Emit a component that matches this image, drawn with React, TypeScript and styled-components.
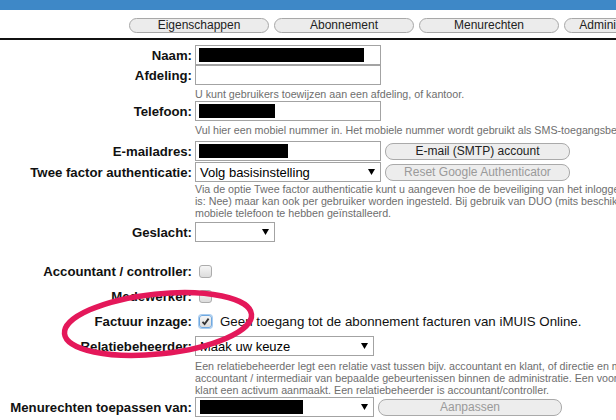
import React from 'react';
import styled, { createGlobalStyle } from 'styled-components';

const GlobalStyle = createGlobalStyle`
  html, body {
    margin: 0;
    padding: 0;
    background: #fff;
    overflow: hidden;
  }
  body {
    font-family: 'Liberation Sans', Arial, sans-serif;
    color: #000;
  }
`;

const Page = styled.div`
  position: relative;
  width: 616px;
  height: 420px;
  overflow: hidden;
`;

const TopBar = styled.div`
  height: 10px;
  background: #3e88c7;
`;

const Tabs = styled.div`
  display: flex;
  gap: 5px;
  padding: 8px 0 5px 129px;
  white-space: nowrap;
`;

const TabButton = styled.div`
  flex: 0 0 140px;
  height: 15px;
  box-sizing: border-box;
  border: 1px solid #a8a8a8;
  border-radius: 8px;
  background: #ececec;
  font-size: 12px;
  line-height: 13px;
  color: #222;
  text-align: center;
  overflow: hidden;
`;

const Divider = styled.div`
  height: 2px;
  background: #111;
`;

const Form = styled.div`
  padding-top: 5px;
`;

const Row = styled.div<{ $h?: number; $mt?: number }>`
  display: grid;
  grid-template-columns: 192px 1fr;
  column-gap: 3px;
  height: ${p => (p.$h ?? 20)}px;
  margin-top: ${p => (p.$mt ?? 0)}px;
`;

const Label = styled.div`
  display: flex;
  align-items: center;
  justify-content: flex-end;
  font-size: 13.2px;
  font-weight: bold;
  white-space: nowrap;
  color: #111;
`;

const Field = styled.div`
  display: flex;
  align-items: center;
  gap: 4px;
  white-space: nowrap;
`;

const Help = styled.div<{ $pt?: number }>`
  grid-column: 2;
  padding-top: ${p => (p.$pt ?? 3)}px;
  font-size: 10.7px;
  line-height: 12px;
  color: #6e6e6e;
  white-space: nowrap;
`;

const TextBox = styled.div<{ $w?: number }>`
  width: ${p => (p.$w ?? 186)}px;
  height: 20px;
  box-sizing: border-box;
  border: 1px solid #a3a3a3;
  padding: 2px 3px;
  display: flex;
  align-items: center;
`;

const Redacted = styled.span<{ $w: number }>`
  display: block;
  width: ${p => p.$w}px;
  height: 14px;
  background: #000;
`;

const Select = styled.div<{ $w?: number }>`
  width: ${p => (p.$w ?? 186)}px;
  height: 20px;
  box-sizing: border-box;
  border: 1px solid #a3a3a3;
  padding: 0 5px;
  display: flex;
  align-items: center;
  justify-content: space-between;
  font-size: 13px;
  color: #000;
`;

const SelectValue = styled.span`
  display: flex;
  align-items: center;
  margin-left: -1px;
`;

const Arrow = () => (
  <svg width="7" height="6" viewBox="0 0 7 6">
    <path d="M0 0 H7 L3.5 6 Z" fill="#000" />
  </svg>
);

const Button = styled.div<{ $w?: number; $disabled?: boolean }>`
  width: ${p => (p.$w ?? 185)}px;
  height: 17px;
  box-sizing: border-box;
  border: 1px solid #aaa;
  border-radius: 8px;
  background: #ededed;
  font-size: 12px;
  line-height: 15px;
  text-align: center;
  color: ${p => (p.$disabled ? '#9a9a9a' : '#222')};
`;

const Check = styled.span<{ $focus?: boolean }>`
  display: inline-flex;
  align-items: center;
  justify-content: center;
  width: 13px;
  height: 13px;
  margin-left: 4px;
  box-sizing: border-box;
  border: 1px solid ${p => (p.$focus ? '#6fa8e0' : '#acacac')};
  border-radius: 3px;
  background: linear-gradient(#f6f6f6, #dcdcdc);
  box-shadow: ${p => (p.$focus ? '0 0 0 1px #a9cdf0' : 'none')};
`;

const CheckText = styled.span`
  margin-left: 4px;
  font-size: 13.3px;
  color: #111;
`;

const Annotation = styled.svg`
  position: absolute;
  left: 0;
  top: 0;
  pointer-events: none;
`;

const CheckBox = ({ checked, focus }: { checked?: boolean; focus?: boolean }) => (
  <Check $focus={focus}>
    {checked && (
      <svg width="9" height="9" viewBox="0 0 9 9">
        <path d="M1.5 4.8 L3.6 7 L7.6 1.6" stroke="#333" strokeWidth="1.8" fill="none" />
      </svg>
    )}
  </Check>
);

const tabs = ['Eigenschappen', 'Abonnement', 'Menurechten', 'Administratierechten'];

export default function App() {
  return (
    <Page>
      <GlobalStyle />
      <TopBar />
      <Tabs>
        {tabs.map(t => (
          <TabButton key={t}>{t}</TabButton>
        ))}
      </Tabs>
      <Divider />
      <Form>
        <Row>
          <Label>Naam:</Label>
          <Field>
            <TextBox>
              <Redacted $w={165} />
            </TextBox>
          </Field>
        </Row>
        <Row>
          <Label>Afdeling:</Label>
          <Field>
            <TextBox />
          </Field>
        </Row>
        <Row $h={16}>
          <Help>U kunt gebruikers toewijzen aan een afdeling, of kantoor.</Help>
        </Row>
        <Row>
          <Label>Telefoon:</Label>
          <Field>
            <TextBox>
              <Redacted $w={76} />
            </TextBox>
          </Field>
        </Row>
        <Row $h={20}>
          <Help>
            Vul hier een mobiel nummer in. Het mobiele nummer wordt gebruikt als SMS-toegangsbeveiliging.
          </Help>
        </Row>
        <Row>
          <Label>E-mailadres:</Label>
          <Field>
            <TextBox>
              <Redacted $w={89} />
            </TextBox>
            <Button>E-mail (SMTP) account</Button>
          </Field>
        </Row>
        <Row $mt={1}>
          <Label>Twee factor authenticatie:</Label>
          <Field>
            <Select>
              <SelectValue>Volg basisinstelling</SelectValue>
              <Arrow />
            </Select>
            <Button $disabled>Reset Google Authenticator</Button>
          </Field>
        </Row>
        <Row $h={40}>
          <Help $pt={1}>
            Via de optie Twee factor authenticatie kunt u aangeven hoe de beveiliging van het inloggen
            <br />
            is: Nee) maar kan ook per gebruiker worden ingesteld. Bij gebruik van DUO (mits beschikbaar)
            <br />
            mobiele telefoon te hebben geïnstalleerd.
          </Help>
        </Row>
        <Row>
          <Label>Geslacht:</Label>
          <Field>
            <Select $w={80}>
              <SelectValue />
              <Arrow />
            </Select>
          </Field>
        </Row>
        <Row $h={25} $mt={17}>
          <Label>Accountant / controller:</Label>
          <Field>
            <CheckBox />
          </Field>
        </Row>
        <Row $h={25}>
          <Label>Medewerker:</Label>
          <Field>
            <CheckBox />
          </Field>
        </Row>
        <Row $h={25}>
          <Label>Factuur inzage:</Label>
          <Field>
            <CheckBox checked focus />
            <CheckText>Geen toegang tot de abonnement facturen van iMUIS Online.</CheckText>
          </Field>
        </Row>
        <Row $mt={2}>
          <Label>Relatiebeheerder:</Label>
          <Field>
            <Select $w={179}>
              <SelectValue>Maak uw keuze</SelectValue>
              <Arrow />
            </Select>
          </Field>
        </Row>
        <Row $h={41}>
          <Help $pt={4}>
            Een relatiebeheerder legt een relatie vast tussen bijv. accountant en klant, of directie en medewerker.
            <br />
            accountant / intermediair van bepaalde gebeurtenissen binnen de administratie. Een voorbeeld
            <br />
            klant een activum aanmaakt. Een relatiebeheerder is accountant/controller.
          </Help>
        </Row>
        <Row>
          <Label>Menurechten toepassen van:</Label>
          <Field>
            <Select $w={179}>
              <SelectValue>
                <Redacted $w={103} />
              </SelectValue>
              <Arrow />
            </Select>
            <Button $w={184} $disabled>Aanpassen</Button>
          </Field>
        </Row>
      </Form>
      <Annotation width="616" height="420" viewBox="0 0 616 420">
        <ellipse
          cx="158"
          cy="324"
          rx="94"
          ry="30"
          transform="rotate(-6 158 324)"
          fill="none"
          stroke="#e4185a"
          strokeWidth="5.5"
        />
      </Annotation>
    </Page>
  );
}
